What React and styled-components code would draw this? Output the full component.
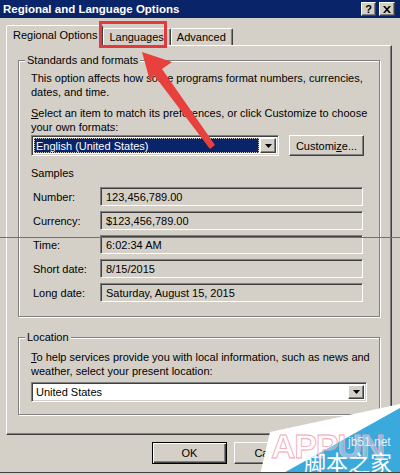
import React from "react";
import styled, { createGlobalStyle, css } from "styled-components";

const FACE = "#d4d0c8";
const SHADOW = "#808080";
const DARK = "#404040";
const NAVY = "#0a246a";

const GlobalStyle = createGlobalStyle`
  html, body { margin: 0; padding: 0; background: ${FACE}; }
  body { font-family: "Liberation Sans", Arial, sans-serif; }
`;

const raised = css`
  border: 1px solid;
  border-color: #fff ${DARK} ${DARK} #fff;
  box-shadow: inset -1px -1px ${SHADOW};
`;

const sunken = css`
  border: 1px solid;
  border-color: ${SHADOW} #fff #fff ${SHADOW};
  box-shadow: inset 1px 1px ${DARK}, inset -1px -1px ${FACE};
`;

const Window = styled.div`
  position: relative;
  width: 400px;
  height: 473px;
  box-sizing: border-box;
  background: ${FACE};
  border-bottom: 1px solid ${DARK};
  overflow: hidden;
  font-size: 11px;
  color: #000;
`;

const TitleBar = styled.div`
  height: 18px;
  background: ${NAVY};
  display: flex;
  align-items: center;
  padding: 0 5px 0 3px;
  color: #fff;
  font-weight: bold;
  font-size: 11.5px;
`;

const TitleText = styled.div`
  flex: 1;
`;

const TitleButton = styled.div`
  ${raised};
  width: ${p => p.$w}px;
  height: 14px;
  box-sizing: border-box;
  margin-left: ${p => p.$gap || 0}px;
  background: ${FACE};
  display: flex;
  align-items: center;
  justify-content: center;
  color: #000;
  font-size: 11px;
`;

const Body = styled.div`
  padding: 7px 8px 0 6px;
`;

const TabStrip = styled.div`
  display: flex;
  align-items: flex-end;
  height: 20px;
`;

const Tab = styled.div`
  position: relative;
  z-index: ${p => (p.$active ? 2 : 1)};
  height: ${p => (p.$active ? 21 : 17)}px;
  box-sizing: border-box;
  margin-bottom: ${p => (p.$active ? -1 : 0)}px;
  padding: ${p => (p.$active ? "0 5px 2px 6px" : "0 6px 0 5px")};
  background: ${FACE};
  border: 1px solid;
  border-bottom: none;
  border-color: #fff ${DARK} transparent #fff;
  box-shadow: inset -1px 0 ${SHADOW};
  border-radius: 2px 2px 0 0;
  display: flex;
  align-items: center;
  white-space: nowrap;
`;

const Panel = styled.div`
  ${raised};
  width: 386px;
  height: 390px;
  box-sizing: border-box;
  padding: 0 11px;
`;

const Group = styled.div`
  position: relative;
  margin-top: ${p => p.$mt}px;
  border: 1px solid ${SHADOW};
  box-shadow: inset 1px 1px #fff, 1px 1px #fff;
  padding: ${p => p.$pt}px 12px ${p => p.$pb}px 12px;
`;

const Legend = styled.span`
  position: absolute;
  top: -8px;
  left: 6px;
  padding: 0 2px;
  line-height: 14px;
  background: ${FACE};
`;

const Text = styled.p`
  margin: ${p => p.$mt || 0}px 0 0;
  line-height: 14px;
  white-space: nowrap;
`;

const ComboRow = styled.div`
  display: flex;
  align-items: center;
  margin-top: ${p => p.$mt || 0}px;
`;

const Combo = styled.div`
  ${sunken};
  width: ${p => p.$w}px;
  height: ${p => p.$h}px;
  box-sizing: border-box;
  padding: 2px;
  background: #fff;
  display: flex;
  align-items: stretch;
`;

const ComboValue = styled.div`
  flex: 1;
  display: flex;
  align-items: center;
  padding-left: 2px;
  box-sizing: border-box;
  ${p =>
    p.$selected &&
    css`
      background: ${NAVY};
      color: #fff;
      outline: 1px dotted #c8c8c8;
      outline-offset: -1px;
      margin-right: 1px;
    `}
`;

const DropButton = styled.div`
  ${raised};
  width: 16px;
  box-sizing: border-box;
  background: ${FACE};
  display: flex;
  align-items: center;
  justify-content: center;
`;

const Button = styled.div`
  ${raised};
  width: ${p => p.$w || 75}px;
  height: ${p => p.$h || 22}px;
  box-sizing: border-box;
  margin-left: ${p => p.$ml || 0}px;
  background: ${FACE};
  display: flex;
  align-items: center;
  justify-content: center;
  ${p =>
    p.$default &&
    css`
      border: 1px solid #000;
      box-shadow: inset 1px 1px #fff, inset -1px -1px ${DARK}, inset -2px -2px ${SHADOW};
    `}
`;

const SamplesGrid = styled.div`
  display: grid;
  grid-template-columns: 67px 263px;
  row-gap: 5px;
  margin-top: 7px;
  padding-left: 2px;
`;

const Label = styled.div`
  display: flex;
  align-items: center;
  height: 19px;
`;

const Field = styled.div`
  ${sunken};
  height: 19px;
  box-sizing: border-box;
  padding-left: 5px;
  background: ${FACE};
  display: flex;
  align-items: center;
`;

const ButtonRow = styled.div`
  display: flex;
  justify-content: flex-end;
  gap: 7px;
  margin: 7px 1px 0 0;
`;

const RedBox = styled.div`
  position: absolute;
  z-index: 5;
  left: 99px;
  top: 21px;
  width: 68px;
  height: 27px;
  box-sizing: border-box;
  border: 3px solid #e23a3e;
  pointer-events: none;
`;

const RedLine = styled.div`
  position: absolute;
  z-index: 5;
  left: 0;
  right: 0;
  top: 237px;
  height: 1px;
  background: #d04a4a;
`;

const Overlay = styled.svg`
  position: absolute;
  z-index: 6;
  left: 0;
  top: 0;
  pointer-events: none;
`;

const Triangle = () => (
  <svg width="7" height="4" viewBox="0 0 7 4">
    <path d="M0 0h7L3.5 4z" fill="#000" />
  </svg>
);

const samples = [
  ["Number:", "123,456,789.00"],
  ["Currency:", "$123,456,789.00"],
  ["Time:", "6:02:34 AM"],
  ["Short date:", "8/15/2015"],
  ["Long date:", "Saturday, August 15, 2015"],
];

export default function App() {
  return (
    <Window>
      <GlobalStyle />
      <TitleBar>
        <TitleText>Regional and Language Options</TitleText>
        <TitleButton $w={15}>
          <b>?</b>
        </TitleButton>
        <TitleButton $w={16} $gap={3}>
          <svg width="8" height="7" viewBox="0 0 8 7">
            <path d="M0 0h2l2 2.2L6 0h2L5 3.5 8 7H6L4 4.8 2 7H0l3-3.5z" fill="#000" />
          </svg>
        </TitleButton>
      </TitleBar>

      <Body>
        <TabStrip>
          <Tab $active>Regional Options</Tab>
          <Tab>Languages</Tab>
          <Tab>Advanced</Tab>
        </TabStrip>

        <Panel>
          <Group $mt={14} $pt={10} $pb={14}>
            <Legend>Standards and formats</Legend>
            <Text>
              This option affects how some programs format numbers, currencies,
              <br />
              dates, and time.
            </Text>
            <Text $mt={7}>
              <u>S</u>elect an item to match its preferences, or click Customize to choose
              <br />
              your own formats:
            </Text>
            <ComboRow $mt={1}>
              <Combo $w={248} $h={21}>
                <ComboValue $selected>English (United States)</ComboValue>
                <DropButton>
                  <Triangle />
                </DropButton>
              </Combo>
              <Button $w={75} $h={21} $ml={10}>
                Customi<u>z</u>e...
              </Button>
            </ComboRow>
            <Text $mt={10}>Samples</Text>
            <SamplesGrid>
              {samples.map(([label, value]) => (
                <React.Fragment key={label}>
                  <Label>{label}</Label>
                  <Field>{value}</Field>
                </React.Fragment>
              ))}
            </SamplesGrid>
          </Group>

          <Group $mt={20} $pt={12} $pb={12}>
            <Legend>Location</Legend>
            <Text>
              <u>T</u>o help services provide you with local information, such as news and
              <br />
              weather, select your present location:
            </Text>
            <ComboRow $mt={4}>
              <Combo $w={336} $h={20}>
                <ComboValue>United States</ComboValue>
                <DropButton>
                  <Triangle />
                </DropButton>
              </Combo>
            </ComboRow>
          </Group>
        </Panel>

        <ButtonRow>
          <Button $default>OK</Button>
          <Button>Cancel</Button>
          <Button>Apply</Button>
        </ButtonRow>
      </Body>

      <RedBox />
      <RedLine />

      <Overlay width="400" height="475" viewBox="0 0 400 475">
        <polygon
          points="142,52 172,62 162,69 215,145 210,149 154,75 150,81"
          fill="#e8403c"
        />
        <polygon points="270,432 400,404 400,475 260,475" fill="#ffffff" />
        <polygon points="280,475 400,408 400,475" fill="#3aa9dc" />
        <text
          x="271"
          y="458"
          fontFamily="Liberation Sans, Arial, sans-serif"
          fontWeight="bold"
          fontSize="34"
          fill="rgba(255,255,255,0.35)"
          stroke="#f3a2b6"
          strokeWidth="0.8"
          textLength="114"
        >
          APPUN
        </text>
        <text
          x="348"
          y="446"
          fontFamily="Liberation Sans, Arial, sans-serif"
          fontSize="12"
          fill="#e4eef6"
        >
          jb51.net
        </text>
        <text
          x="304"
          y="471"
          fontFamily="Noto Sans CJK SC, sans-serif"
          fontSize="22"
          fill="#ffffff"
        >
          脚本之家
        </text>
      </Overlay>
    </Window>
  );
}
